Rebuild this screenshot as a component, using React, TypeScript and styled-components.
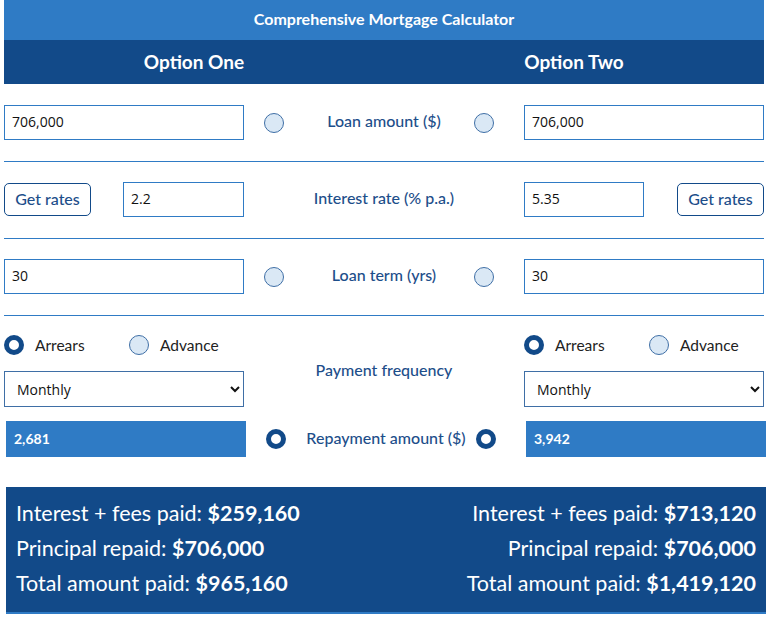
import * as React from "react";
import styled, { createGlobalStyle } from "styled-components";

const LIGHT = "#2f7bc5";
const DARK = "#124a89";
const LABEL = "#1d4e8a";

const GlobalStyle = createGlobalStyle`
  body {
    margin: 0;
    background: #fff;
    font-family: Lato, "Noto Sans", sans-serif;
  }
`;

const Calculator = styled.div`
  width: 760px;
  margin-left: 4px;
`;

const TitleBar = styled.div`
  height: 40px;
  box-sizing: border-box;
  padding-bottom: 3px;
  background: ${LIGHT};
  color: #fff;
  font-weight: 700;
  font-size: 16px;
  display: flex;
  align-items: center;
  justify-content: center;
`;

const OptionsBar = styled.div`
  height: 44px;
  box-sizing: border-box;
  padding-bottom: 2px;
  background: ${DARK};
  color: #fff;
  font-weight: 700;
  font-size: 19px;
  display: grid;
  grid-template-columns: 1fr 1fr;
  align-items: center;
  text-align: center;
`;

const FieldRow = styled.div<{ $first?: boolean }>`
  display: grid;
  grid-template-columns: 240px 1fr 240px;
  align-items: center;
  padding: ${(p) => (p.$first ? "21px" : "20px")} 0 21px;
  border-bottom: 1px solid ${LIGHT};
`;

const Middle = styled.div`
  display: grid;
  grid-template-columns: 1fr auto 1fr;
  align-items: center;
`;

const Label = styled.div`
  color: ${LABEL};
  font-size: 16px;
  font-weight: 500;
  text-align: center;
  white-space: nowrap;
  padding-bottom: 4px;
`;

const RadioSlot = styled.div<{ $side: "left" | "right" }>`
  display: flex;
  justify-content: ${(p) => (p.$side === "left" ? "flex-start" : "flex-end")};
  padding: ${(p) => (p.$side === "left" ? "0 0 0 20px" : "0 30px 0 0")};
`;

const Radio = styled.span<{ $checked?: boolean }>`
  display: inline-block;
  box-sizing: border-box;
  width: 20px;
  height: 20px;
  border-radius: 50%;
  flex: none;
  background: ${(p) => (p.$checked ? "#fff" : "#dae8f5")};
  border: ${(p) => (p.$checked ? `5px solid ${DARK}` : "1.5px solid #3f6fa6")};
`;

const TextInput = styled.input<{ $w?: number }>`
  box-sizing: border-box;
  width: ${(p) => (p.$w ? `${p.$w}px` : "100%")};
  height: 35px;
  border: 1px solid ${LIGHT};
  border-radius: 0;
  padding: 0 7px 2px;
  font-family: "Open Sans", "Noto Sans", sans-serif;
  font-size: 14px;
  color: #111;
  background: #fff;
  outline: none;
`;

const RateCell = styled.div`
  display: flex;
  align-items: center;
  justify-content: space-between;
`;

const RatesButton = styled.button`
  box-sizing: border-box;
  width: 87px;
  height: 33px;
  padding: 0 0 3px;
  background: #fff;
  border: 1px solid ${DARK};
  border-radius: 5px;
  color: ${LABEL};
  font-family: Lato, sans-serif;
  font-size: 16px;
  font-weight: 500;
  cursor: pointer;
`;

const FrequencySection = styled.div`
  display: grid;
  grid-template-columns: 240px 1fr 240px;
  align-items: center;
  padding-top: 19px;
`;

const OptionColumn = styled.div`
  display: flex;
  flex-direction: column;
  gap: 16px;
`;

const RadioGroup = styled.div`
  display: grid;
  grid-template-columns: 125px auto;
`;

const RadioOption = styled.label`
  display: flex;
  align-items: center;
  gap: 11px;
  font-size: 15.5px;
  color: #222;
`;

const FrequencySelect = styled.select`
  box-sizing: border-box;
  width: 100%;
  height: 36px;
  border: 1px solid #3f6fa6;
  border-radius: 0;
  padding: 0 8px;
  font-family: "Open Sans", "Noto Sans", sans-serif;
  font-size: 14px;
  color: #111;
  background: #fff;
`;

const RepaymentRow = styled.div`
  width: 760px;
  display: grid;
  grid-template-columns: 240px 1fr 240px;
  align-items: center;
  margin: 14px 0 0 2px;
`;

const RepaymentBox = styled.div`
  height: 36px;
  box-sizing: border-box;
  padding: 0 0 2px 8px;
  background: ${LIGHT};
  color: #fff;
  font-weight: 700;
  font-size: 14px;
  display: flex;
  align-items: center;
`;

const Summary = styled.div`
  width: 760px;
  margin: 30px 0 0 2px;
  height: 127px;
  box-sizing: border-box;
  padding: 9px 10px 0 10px;
  background: ${DARK};
  border-bottom: 2px solid ${LIGHT};
  display: flex;
  justify-content: space-between;
  color: #fff;
`;

const SummaryColumn = styled.div<{ $align: "left" | "right" }>`
  text-align: ${(p) => p.$align};
  font-size: 21.5px;
  line-height: 35px;
  white-space: nowrap;
`;

const Amount = styled.b`
  font-weight: 700;
`;

type Side = { loan: string; rate: string; term: string; repay: string; interest: string; total: string };

const sides: Side[] = [
  { loan: "706,000", rate: "2.2", term: "30", repay: "2,681", interest: "$259,160", total: "$965,160" },
  { loan: "706,000", rate: "5.35", term: "30", repay: "3,942", interest: "$713,120", total: "$1,419,120" },
];

const FieldMiddle = ({ label, checked }: { label: string; checked?: boolean }) => (
  <Middle>
    <RadioSlot $side="left">
      <Radio $checked={checked} />
    </RadioSlot>
    <Label>{label}</Label>
    <RadioSlot $side="right">
      <Radio $checked={checked} />
    </RadioSlot>
  </Middle>
);

const FrequencyColumn = () => (
  <OptionColumn>
    <RadioGroup>
      <RadioOption>
        <Radio $checked />
        Arrears
      </RadioOption>
      <RadioOption>
        <Radio />
        Advance
      </RadioOption>
    </RadioGroup>
    <FrequencySelect defaultValue="Monthly">
      <option>Weekly</option>
      <option>Fortnightly</option>
      <option>Monthly</option>
    </FrequencySelect>
  </OptionColumn>
);

export default function App() {
  const [one, two] = sides;
  return (
    <>
      <GlobalStyle />
      <Calculator>
        <TitleBar>Comprehensive Mortgage Calculator</TitleBar>
        <OptionsBar>
          <div>Option One</div>
          <div>Option Two</div>
        </OptionsBar>

        <FieldRow $first>
          <TextInput defaultValue={one.loan} />
          <FieldMiddle label="Loan amount ($)" />
          <TextInput defaultValue={two.loan} />
        </FieldRow>

        <FieldRow>
          <RateCell>
            <RatesButton>Get rates</RatesButton>
            <TextInput $w={121} defaultValue={one.rate} />
          </RateCell>
          <Label>Interest rate (% p.a.)</Label>
          <RateCell>
            <TextInput $w={120} defaultValue={two.rate} />
            <RatesButton>Get rates</RatesButton>
          </RateCell>
        </FieldRow>

        <FieldRow>
          <TextInput defaultValue={one.term} />
          <FieldMiddle label="Loan term (yrs)" />
          <TextInput defaultValue={two.term} />
        </FieldRow>

        <FrequencySection>
          <FrequencyColumn />
          <Label>Payment frequency</Label>
          <FrequencyColumn />
        </FrequencySection>

        <RepaymentRow>
          <RepaymentBox>{one.repay}</RepaymentBox>
          <FieldMiddle label="Repayment amount ($)" checked />
          <RepaymentBox>{two.repay}</RepaymentBox>
        </RepaymentRow>

        <Summary>
          {sides.map((s, i) => (
            <SummaryColumn key={i} $align={i === 0 ? "left" : "right"}>
              <div>
                Interest + fees paid: <Amount>{s.interest}</Amount>
              </div>
              <div>
                Principal repaid: <Amount>$706,000</Amount>
              </div>
              <div>
                Total amount paid: <Amount>{s.total}</Amount>
              </div>
            </SummaryColumn>
          ))}
        </Summary>
      </Calculator>
    </>
  );
}
